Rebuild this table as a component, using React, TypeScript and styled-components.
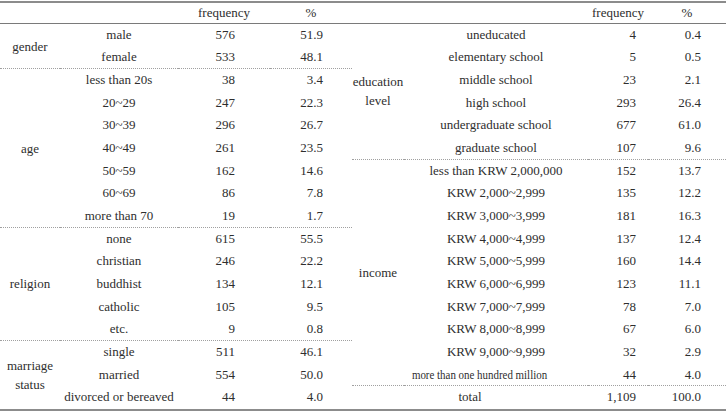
import styled, { createGlobalStyle } from 'styled-components'

// last flag: label squeezed to fit, as in the printed table
type Row = [string, string, string, boolean?]
type Group = { label?: string[]; rows: Row[] }

const leftGroups: Group[] = [
    { label: ['gender'], rows: [['male', '576', '51.9'], ['female', '533', '48.1']] },
    {
        label: ['age'],
        rows: [
            ['less than 20s', '38', '3.4'],
            ['20~29', '247', '22.3'],
            ['30~39', '296', '26.7'],
            ['40~49', '261', '23.5'],
            ['50~59', '162', '14.6'],
            ['60~69', '86', '7.8'],
            ['more than 70', '19', '1.7'],
        ],
    },
    {
        label: ['religion'],
        rows: [
            ['none', '615', '55.5'],
            ['christian', '246', '22.2'],
            ['buddhist', '134', '12.1'],
            ['catholic', '105', '9.5'],
            ['etc.', '9', '0.8'],
        ],
    },
    {
        label: ['marriage', 'status'],
        rows: [['single', '511', '46.1'], ['married', '554', '50.0'], ['divorced or bereaved', '44', '4.0']],
    },
]

const rightGroups: Group[] = [
    {
        label: ['education', 'level'],
        rows: [
            ['uneducated', '4', '0.4'],
            ['elementary school', '5', '0.5'],
            ['middle school', '23', '2.1'],
            ['high school', '293', '26.4'],
            ['undergraduate school', '677', '61.0'],
            ['graduate school', '107', '9.6'],
        ],
    },
    {
        label: ['income'],
        rows: [
            ['less than KRW 2,000,000', '152', '13.7'],
            ['KRW 2,000~2,999', '135', '12.2'],
            ['KRW 3,000~3,999', '181', '16.3'],
            ['KRW 4,000~4,999', '137', '12.4'],
            ['KRW 5,000~5,999', '160', '14.4'],
            ['KRW 6,000~6,999', '123', '11.1'],
            ['KRW 7,000~7,999', '78', '7.0'],
            ['KRW 8,000~8,999', '67', '6.0'],
            ['KRW 9,000~9,999', '32', '2.9'],
            ['more than one hundred million', '44', '4.0', true],
        ],
    },
    { rows: [['total', '1,109', '100.0']] },
]

type Side = { cols: string; freqPad: number; pctPad: number; groups: Group[] }

const sides: Side[] = [
    { cols: '60px 118px 92px 82px', freqPad: 35, pctPad: 29, groups: leftGroups },
    { cols: '52px 184px 60px 78px', freqPad: 12, pctPad: 25, groups: rightGroups },
]

export default function App() {
    return (
        <>
            <GlobalStyle />
            <Page>
                {sides.map((side, s) => (
                    <Grid key={s} $cols={side.cols}>
                        <Head />
                        <Head />
                        <Head>frequency</Head>
                        <Head>%</Head>
                        {side.groups.map((g, gi) => {
                            const dotted = gi < side.groups.length - 1
                            return g.rows.map((r, ri) => {
                                const last = dotted && ri === g.rows.length - 1
                                return [
                                    ri === 0 && g.label ? (
                                        <Category key={`c${gi}`} $span={g.rows.length} $dotted={dotted}>
                                            <span>
                                                {g.label.map((l, li) => (
                                                    <div key={li}>{l}</div>
                                                ))}
                                            </span>
                                        </Category>
                                    ) : null,
                                    <Item key={`i${gi}-${ri}`} $dotted={last} $wide={!g.label} $squeezed={!!r[3]}>
                                        <Label $squeezed={!!r[3]}>{r[0]}</Label>
                                    </Item>,
                                    <Num key={`f${gi}-${ri}`} $dotted={last} $pad={side.freqPad}>
                                        {r[1]}
                                    </Num>,
                                    <Num key={`p${gi}-${ri}`} $dotted={last} $pad={side.pctPad}>
                                        {r[2]}
                                    </Num>,
                                ]
                            })
                        })}
                    </Grid>
                ))}
            </Page>
        </>
    )
}

const GlobalStyle = createGlobalStyle`
    body {
        margin: 0;
        background: #fff;
        font-family: "Liberation Serif", "Times New Roman", serif;
        font-size: 13px;
        color: #2e2e2e;
    }
`

const Page = styled.div`
    display: flex;
    width: 726px;
    margin-top: 1px;
    border-top: 2px solid #8c8c8c;
    border-bottom: 2px solid #8c8c8c;
`

const Grid = styled.div<{ $cols: string }>`
    display: grid;
    grid-template-columns: ${p => p.$cols};
    grid-template-rows: 21px repeat(17, 1fr);
    height: 406px;
`

const Cell = styled.div<{ $dotted?: boolean }>`
    box-sizing: border-box;
    display: flex;
    align-items: center;
    white-space: nowrap;
    border-bottom: 1px ${p => (p.$dotted ? 'dotted #a0a0a0' : 'solid transparent')};
`

const Head = styled(Cell)`
    justify-content: center;
    border-bottom: 1px solid #7a7a7a;
`

const Category = styled(Cell)<{ $span: number }>`
    grid-column: 1;
    grid-row: span ${p => p.$span};
    justify-content: center;
    text-align: center;
    line-height: 19px;
`

const Item = styled(Cell)<{ $wide?: boolean; $squeezed?: boolean }>`
    justify-content: center;
    ${p => (p.$wide ? 'grid-column: 1 / span 2;' : '')}
    ${p => (p.$squeezed ? 'padding-right: 32px;' : '')}
`

const Label = styled.span<{ $squeezed?: boolean }>`
    display: inline-block;
    ${p => (p.$squeezed ? 'transform: scaleX(0.84);' : '')}
`

const Num = styled(Cell)<{ $pad: number }>`
    justify-content: flex-end;
    padding-right: ${p => p.$pad}px;
`
